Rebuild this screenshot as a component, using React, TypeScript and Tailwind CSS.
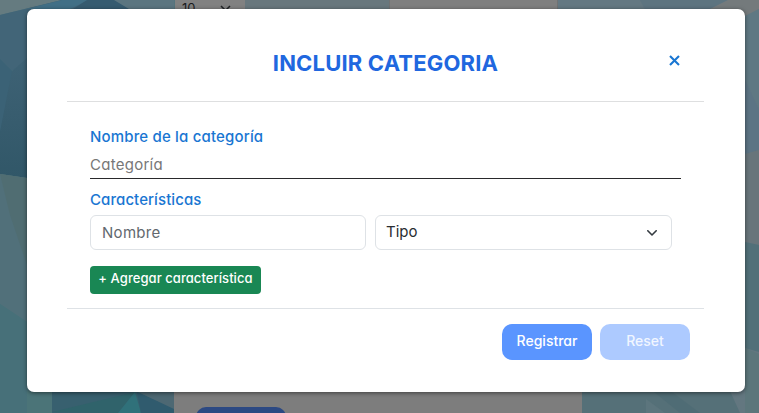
import React from "react";

function Backdrop() {
  return (
    <svg className="absolute inset-0" width="759" height="413" viewBox="0 0 759 413" aria-hidden="true">
      <defs>
        <linearGradient id="base" x1="0" x2="1">
          <stop offset="0" stopColor="#47717a" />
          <stop offset="0.5" stopColor="#647880" />
          <stop offset="1" stopColor="#637780" />
        </linearGradient>
        <linearGradient id="deep" x1="0" y1="0" x2="0" y2="1">
          <stop offset="0" stopColor="#3e6275" />
          <stop offset="1" stopColor="#315768" />
        </linearGradient>
      </defs>
      <rect width="759" height="413" fill="url(#base)" />
      <polygon points="0,0 62,0 0,15" fill="#657b80" />
      <polygon points="0,15 62,0 95,0 27,60 12,71 0,59" fill="#426578" />
      <polygon points="62,0 89,0 70,9 27,9" fill="#416f86" />
      <polygon points="87,0 115,0 130,9 73,9" fill="#365b70" />
      <polygon points="114,0 174,0 174,9 129,9" fill="#5b7580" />
      <polygon points="0,59 12,71 27,58 27,178 0,174" fill="url(#deep)" />
      <polygon points="12,71 0,132 0,59" fill="#3b6276" />
      <polygon points="0,174 27,178 27,322 0,304" fill="#51707a" />
      <polygon points="10,215 27,265 27,178 0,174" fill="#506d72" />
      <polygon points="0,304 27,322 27,413 0,413" fill="#477079" />
      <polygon points="27,391 52,391 52,413 27,413" fill="#4b7478" />
      <polygon points="52,391 174,391 174,413 52,413" fill="#38606f" />
      <polygon points="52,412 135,392 118,413" fill="#30636b" />
      <polygon points="135,392 141,413 118,413" fill="#30717a" />
      <polygon points="137,392 174,408 174,413 141,413" fill="#305b6e" />
      <polygon points="138,392 174,392 174,409" fill="#4d6873" />
      <polygon points="245,0 390,0 390,9 245,9" fill="#68777d" />
      <polygon points="558,0 640,0 645,9 558,9" fill="#647882" />
      <polygon points="640,0 728,0 710,9 645,9" fill="#5d7480" />
      <polygon points="728,0 759,0 759,9 745,17 710,9" fill="#747a7c" />
      <polygon points="745,16 759,9 759,110 745,80" fill="#5f7883" />
      <polygon points="745,80 759,110 759,150 745,154" fill="#5c7484" />
      <polygon points="745,154 759,150 759,245 745,242" fill="#68757b" />
      <polygon points="745,242 759,245 759,352 745,348" fill="#527079" />
      <polygon points="745,348 759,354 759,413 745,413" fill="#5c767b" />
      <polygon points="582,391 730,391 740,413 582,413" fill="#557078" />
      <polygon points="646,399 665,413 646,413" fill="#5c757d" />
      <polygon points="654,392 672,392 700,413 680,413" fill="#4f6c75" />
    </svg>
  );
}

function PageBehind() {
  return (
    <div className="absolute inset-0 flex flex-col justify-between pl-[174px] pr-[177px]">
      <div className="flex h-[9px]">
        <div className="ml-px flex h-7 w-[70px] shrink-0 items-start justify-between bg-[#818181] pl-[7px] pr-[14px] pt-px text-[13px] leading-[14px] text-[#191b1d]">
          <span>10</span>
          <svg className="mt-[4px]" width="11" height="7" viewBox="0 0 11 7" fill="none" stroke="#202326" strokeWidth="1.5">
            <path d="M1 1l4.500 4.500L10 1" />
          </svg>
        </div>
        <div className="ml-[144px] w-[169px] shrink-0 border-x border-[#707273] bg-[#7f7f7f]" />
      </div>
      <div className="h-[22px] overflow-hidden bg-[#7d7d7d] pl-[22px] pt-4">
        <div className="h-9 w-[90px] rounded-[10px] bg-[#2c4983]" />
      </div>
    </div>
  );
}

export default function App() {
  return (
    <main className="relative h-[413px] w-[759px] overflow-hidden font-['Inter','Liberation_Sans',sans-serif] [font-feature-settings:'cv11','ss03']">
      <Backdrop />
      <PageBehind />
      <div className="relative pl-[27px] pt-[9px]">
        <section className="h-[383px] w-[718px] rounded-[7px] bg-white px-10 shadow-[0_1px_4px_rgba(0,0,0,0.5)]">
          <header className="flex h-[93px] w-[637px] border-b border-[#dedfe0] pt-[37px]">
            <h1 className="w-[637px] shrink-0 whitespace-nowrap text-center text-[22px] font-bold leading-[34px] tracking-[0.18px] text-[#2067df]">
              INCLUIR CATEGORIA
            </h1>
            <button className="-ml-9 mt-[8px] flex size-[13px] shrink-0 items-center justify-center" aria-label="Cerrar">
              <svg width="11" height="11" viewBox="0 0 11 11" stroke="#1976d2" strokeWidth="2.1">
                <path d="M1 1l9 9M10 1l-9 9" />
              </svg>
            </button>
          </header>
          <form className="flex h-[207px] w-[637px] flex-col items-start border-b border-[#dee2e6] px-[23px] pt-[24px]">
            <label className="whitespace-nowrap text-[15px] font-medium leading-[22px] tracking-[0.17px] text-[#1976d2]">Nombre de la categoría</label>
            <input
              className="mt-[4px] h-[27px] w-full border-b border-[#29292b] pb-px text-[15px] leading-[22px] tracking-[0.27px] text-[#222] outline-none placeholder:text-[#777]"
              placeholder="Categoría"
            />
            <label className="mt-[10px] whitespace-nowrap text-[15px] font-medium leading-[22px] tracking-[0.08px] text-[#1976d2]">Características</label>
            <div className="mt-[4px] flex gap-[9px]">
              <input
                className="h-[35px] w-[276px] rounded-[6px] border border-[#dee2e6] px-[11px] pb-px text-[15px] tracking-[0.3px] outline-none placeholder:text-[#62686e]"
                placeholder="Nombre"
              />
              <div className="flex h-[35px] w-[297px] items-center justify-between rounded-[6px] border border-[#dee2e6] pl-[10px] pr-[14px] text-[15px] text-[#292d31]">
                <span>Tipo</span>
                <svg width="10" height="6" viewBox="0 0 10 6" fill="none" stroke="#343a40" strokeWidth="1.6" strokeLinecap="round" strokeLinejoin="round">
                  <path d="M.8.8L5 5 9.200.8" />
                </svg>
              </div>
            </div>
            <button type="button" className="mt-[16px] h-[28px] w-[171px] whitespace-nowrap rounded-[4px] bg-[#198754] pb-[2px] text-[13px] font-medium tracking-[0.06px] text-white">
              + Agregar característica
            </button>
          </form>
          <footer className="flex w-[637px] justify-end gap-2 pr-[14px] pt-[15px] text-[14px] font-medium text-white">
            <button className="h-9 w-[90px] rounded-[10px] bg-[#5a95ff] pb-[3px]">Registrar</button>
            <button className="h-9 w-[90px] rounded-[10px] bg-[#adcaff] pb-[3px] text-[#f1f6ff]">Reset</button>
          </footer>
        </section>
      </div>
    </main>
  );
}
